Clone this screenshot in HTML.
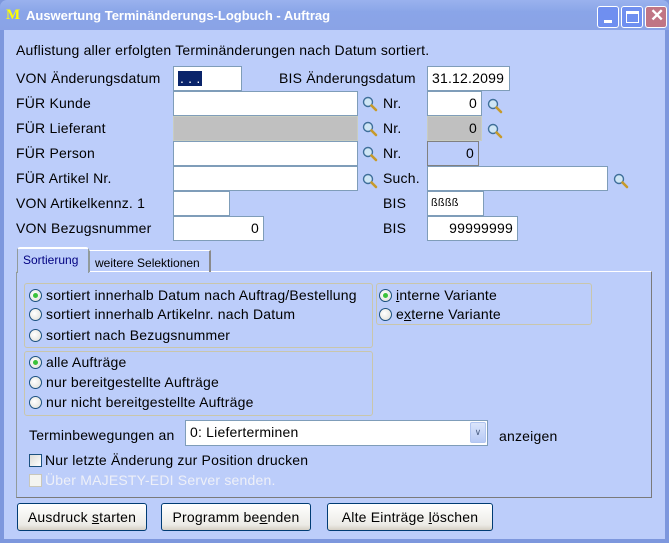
<!DOCTYPE html>
<html><head><meta charset="utf-8"><style>
*{box-sizing:border-box;margin:0;padding:0}
body{width:669px;height:543px;overflow:hidden;background:#7d97dd;font-family:"Liberation Sans",sans-serif;font-size:14px;letter-spacing:0.2px;color:#000;position:relative}
.a{position:absolute}
#title{left:0;top:0;width:669px;height:30px;background:linear-gradient(#9ab2ee,#8aa5e8 40%,#8aa3e6);border-radius:7px 7px 0 0;letter-spacing:0}
#body{left:4px;top:30px;width:661px;height:509px;background:#bccdfa}
.t{position:absolute;white-space:nowrap;line-height:16px}
.in{position:absolute;background:#fff;border:1px solid #7f9db9;height:25px;line-height:23px;padding:0 4px;white-space:nowrap}
.g{background:#c0c0c0;border:1px solid #c8ccc0}
.r{text-align:right}
.mag{position:absolute;width:16px;height:16px}
.tb{position:absolute;width:22px;height:22px;border:1px solid #fff;border-radius:3px;top:6px}
.rad{position:absolute;width:13px;height:13px;border-radius:50%;border:1px solid #1c5180;background:radial-gradient(circle at 40% 40%,#fff,#dcdcd4)}
.rad.on::after{content:"";position:absolute;left:3px;top:3px;width:5px;height:5px;border-radius:50%;background:#3ac23a}
.grp{position:absolute;border:1px solid #c9c6ab;border-radius:3px}
.btn{position:absolute;top:503px;height:28px;border:1px solid #003c74;border-radius:3px;background:linear-gradient(#fff,#ecebe6 80%,#d6d0c5);text-align:center;line-height:26px}
.cb{position:absolute;width:13px;height:13px;border:1px solid #1c5180;background:linear-gradient(135deg,#dcdcd7,#fff)}
</style></head><body>
<div id="title" class="a">
 <div class="t" style="left:6px;top:7px;color:#ff0;font-weight:bold;font-family:'Liberation Serif',serif;font-size:15px">M</div>
 <div class="t" style="left:26px;top:8px;color:#fff;font-weight:bold;font-size:13px">Auswertung Terminänderungs-Logbuch - Auftrag</div>
 <div class="tb" style="left:597px;background:#6f8ff0"><div class="a" style="left:6px;top:13px;width:8px;height:3px;background:#fff"></div></div>
 <div class="tb" style="left:621px;background:#6f8ff0"><div class="a" style="left:4px;top:4px;width:13px;height:12px;border:1px solid #fff;border-top-width:3px"></div></div>
 <div class="tb" style="left:645px;background:#c07585"><div class="t" style="left:4px;top:1px;color:#fff;font-size:17px;font-weight:bold">✕</div></div>
</div>
<div id="body" class="a"></div>

<div class="t" style="left:16px;top:42px">Auflistung aller erfolgten Terminänderungen nach Datum sortiert.</div>

<div class="t" style="left:16px;top:70px">VON Änderungsdatum</div>
<div class="in" style="left:173px;top:66px;width:69px"><span style="background:#0a246a;color:#fff;padding:0 2px;display:inline-block;line-height:15px">. . .</span></div>
<div class="t" style="left:279px;top:70px">BIS Änderungsdatum</div>
<div class="in" style="left:427px;top:66px;width:83px">31.12.2099</div>

<div class="t" style="left:16px;top:95px">FÜR Kunde</div>
<div class="in" style="left:173px;top:91px;width:185px"></div>
<div class="t" style="left:383px;top:95px">Nr.</div>
<div class="in r" style="left:427px;top:91px;width:55px">0</div>

<div class="t" style="left:16px;top:120px">FÜR Lieferant</div>
<div class="in g" style="left:173px;top:116px;width:185px"></div>
<div class="t" style="left:383px;top:120px">Nr.</div>
<div class="in g r" style="left:427px;top:116px;width:55px">0</div>

<div class="t" style="left:16px;top:145px">FÜR Person</div>
<div class="in" style="left:173px;top:141px;width:185px"></div>
<div class="t" style="left:383px;top:145px">Nr.</div>
<div class="in r" style="left:427px;top:141px;width:52px;background:#bccdfa;border-color:#808080">0</div>

<div class="t" style="left:16px;top:170px">FÜR Artikel Nr.</div>
<div class="in" style="left:173px;top:166px;width:185px"></div>
<div class="t" style="left:383px;top:170px">Such.</div>
<div class="in" style="left:427px;top:166px;width:181px"></div>

<div class="t" style="left:16px;top:195px">VON Artikelkennz. 1</div>
<div class="in" style="left:173px;top:191px;width:57px"></div>
<div class="t" style="left:383px;top:195px">BIS</div>
<div class="in" style="left:427px;top:191px;width:57px;font-size:11px;padding-left:3px">ßßßß</div>

<div class="t" style="left:16px;top:220px">VON Bezugsnummer</div>
<div class="in r" style="left:173px;top:216px;width:91px">0</div>
<div class="t" style="left:383px;top:220px">BIS</div>
<div class="in r" style="left:427px;top:216px;width:91px">99999999</div>

<svg class="mag" style="left:362px;top:96px" viewBox="0 0 16 16"><circle cx="6" cy="6" r="4.5" fill="#cfe6f5" stroke="#3f6f9a" stroke-width="1.4"/><path d="M9.5 9.5 14 14" stroke="#c79a2a" stroke-width="2.6" stroke-linecap="round"/></svg>
<svg class="mag" style="left:487px;top:98px" viewBox="0 0 16 16"><circle cx="6" cy="6" r="4.5" fill="#cfe6f5" stroke="#3f6f9a" stroke-width="1.4"/><path d="M9.5 9.5 14 14" stroke="#c79a2a" stroke-width="2.6" stroke-linecap="round"/></svg>
<svg class="mag" style="left:362px;top:121px" viewBox="0 0 16 16"><circle cx="6" cy="6" r="4.5" fill="#cfe6f5" stroke="#3f6f9a" stroke-width="1.4"/><path d="M9.5 9.5 14 14" stroke="#c79a2a" stroke-width="2.6" stroke-linecap="round"/></svg>
<svg class="mag" style="left:487px;top:123px" viewBox="0 0 16 16"><circle cx="6" cy="6" r="4.5" fill="#cfe6f5" stroke="#3f6f9a" stroke-width="1.4"/><path d="M9.5 9.5 14 14" stroke="#c79a2a" stroke-width="2.6" stroke-linecap="round"/></svg>
<svg class="mag" style="left:362px;top:146px" viewBox="0 0 16 16"><circle cx="6" cy="6" r="4.5" fill="#cfe6f5" stroke="#3f6f9a" stroke-width="1.4"/><path d="M9.5 9.5 14 14" stroke="#c79a2a" stroke-width="2.6" stroke-linecap="round"/></svg>
<svg class="mag" style="left:362px;top:173px" viewBox="0 0 16 16"><circle cx="6" cy="6" r="4.5" fill="#cfe6f5" stroke="#3f6f9a" stroke-width="1.4"/><path d="M9.5 9.5 14 14" stroke="#c79a2a" stroke-width="2.6" stroke-linecap="round"/></svg>
<svg class="mag" style="left:613px;top:173px" viewBox="0 0 16 16"><circle cx="6" cy="6" r="4.5" fill="#cfe6f5" stroke="#3f6f9a" stroke-width="1.4"/><path d="M9.5 9.5 14 14" stroke="#c79a2a" stroke-width="2.6" stroke-linecap="round"/></svg>

<!-- tab panel -->
<div class="a" style="left:16px;top:271px;width:636px;height:227px;border:1px solid #919b9c;border-right-color:#7a7a7a;border-bottom-color:#7a7a7a;border-top-color:#fff"></div>
<div class="a" style="left:17px;top:247px;width:72px;height:26px;background:#bccdfa;border:1px solid #919b9c;border-bottom:none;border-top:2px solid #fff;border-radius:3px 3px 0 0"></div>
<div class="t" style="left:23px;top:252px;font-size:12px;letter-spacing:0;color:#000080">Sortierung</div>
<div class="a" style="left:89px;top:250px;width:122px;height:22px;border:1px solid #919b9c;border-bottom:none;border-top-color:#fff;border-right:2px solid #8a8a8a"></div>
<div class="t" style="left:95px;top:255px;font-size:12px;letter-spacing:0">weitere Selektionen</div>

<div class="grp" style="left:24px;top:283px;width:349px;height:65px"></div>
<div class="grp" style="left:376px;top:283px;width:216px;height:42px"></div>
<div class="grp" style="left:24px;top:351px;width:349px;height:65px"></div>

<div class="rad on" style="left:29px;top:289px"></div><div class="t" style="left:46px;top:287px">sortiert innerhalb Datum nach Auftrag/Bestellung</div>
<div class="rad" style="left:29px;top:308px"></div><div class="t" style="left:46px;top:306px">sortiert innerhalb Artikelnr. nach Datum</div>
<div class="rad" style="left:29px;top:329px"></div><div class="t" style="left:46px;top:327px">sortiert nach Bezugsnummer</div>
<div class="rad on" style="left:379px;top:289px"></div><div class="t" style="left:396px;top:287px"><u>i</u>nterne Variante</div>
<div class="rad" style="left:379px;top:308px"></div><div class="t" style="left:396px;top:306px">e<u>x</u>terne Variante</div>
<div class="rad on" style="left:29px;top:356px"></div><div class="t" style="left:46px;top:354px">alle Aufträge</div>
<div class="rad" style="left:29px;top:376px"></div><div class="t" style="left:46px;top:374px">nur bereitgestellte Aufträge</div>
<div class="rad" style="left:29px;top:396px"></div><div class="t" style="left:46px;top:394px">nur nicht bereitgestellte Aufträge</div>

<div class="t" style="left:29px;top:427px">Terminbewegungen an</div>
<div class="in" style="left:185px;top:420px;width:303px;height:26px;padding-left:4px">0: Lieferterminen</div>
<div class="a" style="left:470px;top:422px;width:16px;height:21px;background:linear-gradient(#dbe5fb,#b7caf5);border:1px solid #b1c5f0;border-radius:2px;color:#4d6185;font-size:9px;text-align:center;line-height:19px">&#8744;</div>
<div class="t" style="left:499px;top:428px">anzeigen</div>

<div class="cb" style="left:29px;top:454px"></div><div class="t" style="left:45px;top:452px">Nur letzte Änderung zur Position drucken</div>
<div class="cb" style="left:29px;top:474px;border-color:#c9c7ba;background:#f4f4f0"></div><div class="t" style="left:45px;top:472px;color:#eef0f8">Über MAJESTY-EDI Server senden.</div>

<div class="btn" style="left:17px;width:130px">Ausdruck <u>s</u>tarten</div>
<div class="btn" style="left:161px;width:150px">Programm be<u>e</u>nden</div>
<div class="btn" style="left:327px;width:166px">Alte Einträge <u>l</u>öschen</div>
</body></html>
